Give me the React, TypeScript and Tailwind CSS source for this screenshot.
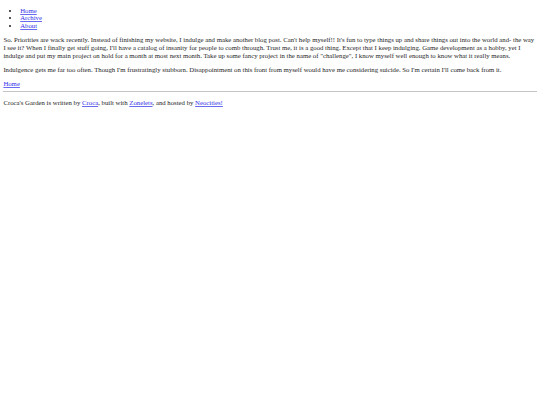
export default function App() {
  const link = "text-[#2f2fe8] underline decoration-[#6a6af0]";
  return (
    <div className="bg-white min-h-[405px] w-[540px] px-[3.375px] text-[#1e1e1e] text-[6.75px] leading-[1.13]" style={{ fontFamily: '"Liberation Serif", "Times New Roman", serif' }}>
      <nav>
        <ul className="list-disc mt-0 mb-[6.75px] pt-[6.75px] pl-[16.875px]">
          <li><a className={link} href="#">Home</a></li>
          <li><a className={link} href="#">Archive</a></li>
          <li><a className={link} href="#">About</a></li>
        </ul>
      </nav>
      <main>
        <p className="my-[6.75px]">
          So. Priorities are wack recently. Instead of finishing my website, I indulge and make another blog post. Can't help myself!! It's fun to type things up and share things out into the world and- the way I see it? When I finally get stuff going, I'll have a catalog of insanity for people to comb through. Trust me, it is a good thing. Except that I keep indulging. Game development as a hobby, yet I indulge and put my main project on hold for a month at most next month. Take up some fancy project in the name of "challenge", I know myself well enough to know what it really means.
        </p>
        <p className="my-[6.75px]">
          Indulgence gets me far too often. Though I'm frustratingly stubborn. Disappointment on this front from myself would have me considering suicide. So I'm certain I'll come back from it.
        </p>
        <div><a className={link} href="#">Home</a></div>
      </main>
      <hr className="my-[3.375px] border-0 border-t border-[#c4c4c4]" />
      <footer>
        <p className="my-[6.75px]">
          Croca's Garden is written by <a className={link} href="#">Croca</a>, built with <a className={link} href="#">Zonelets</a>, and hosted by <a className={link} href="#">Neocities!</a>
        </p>
      </footer>
    </div>
  );
}
